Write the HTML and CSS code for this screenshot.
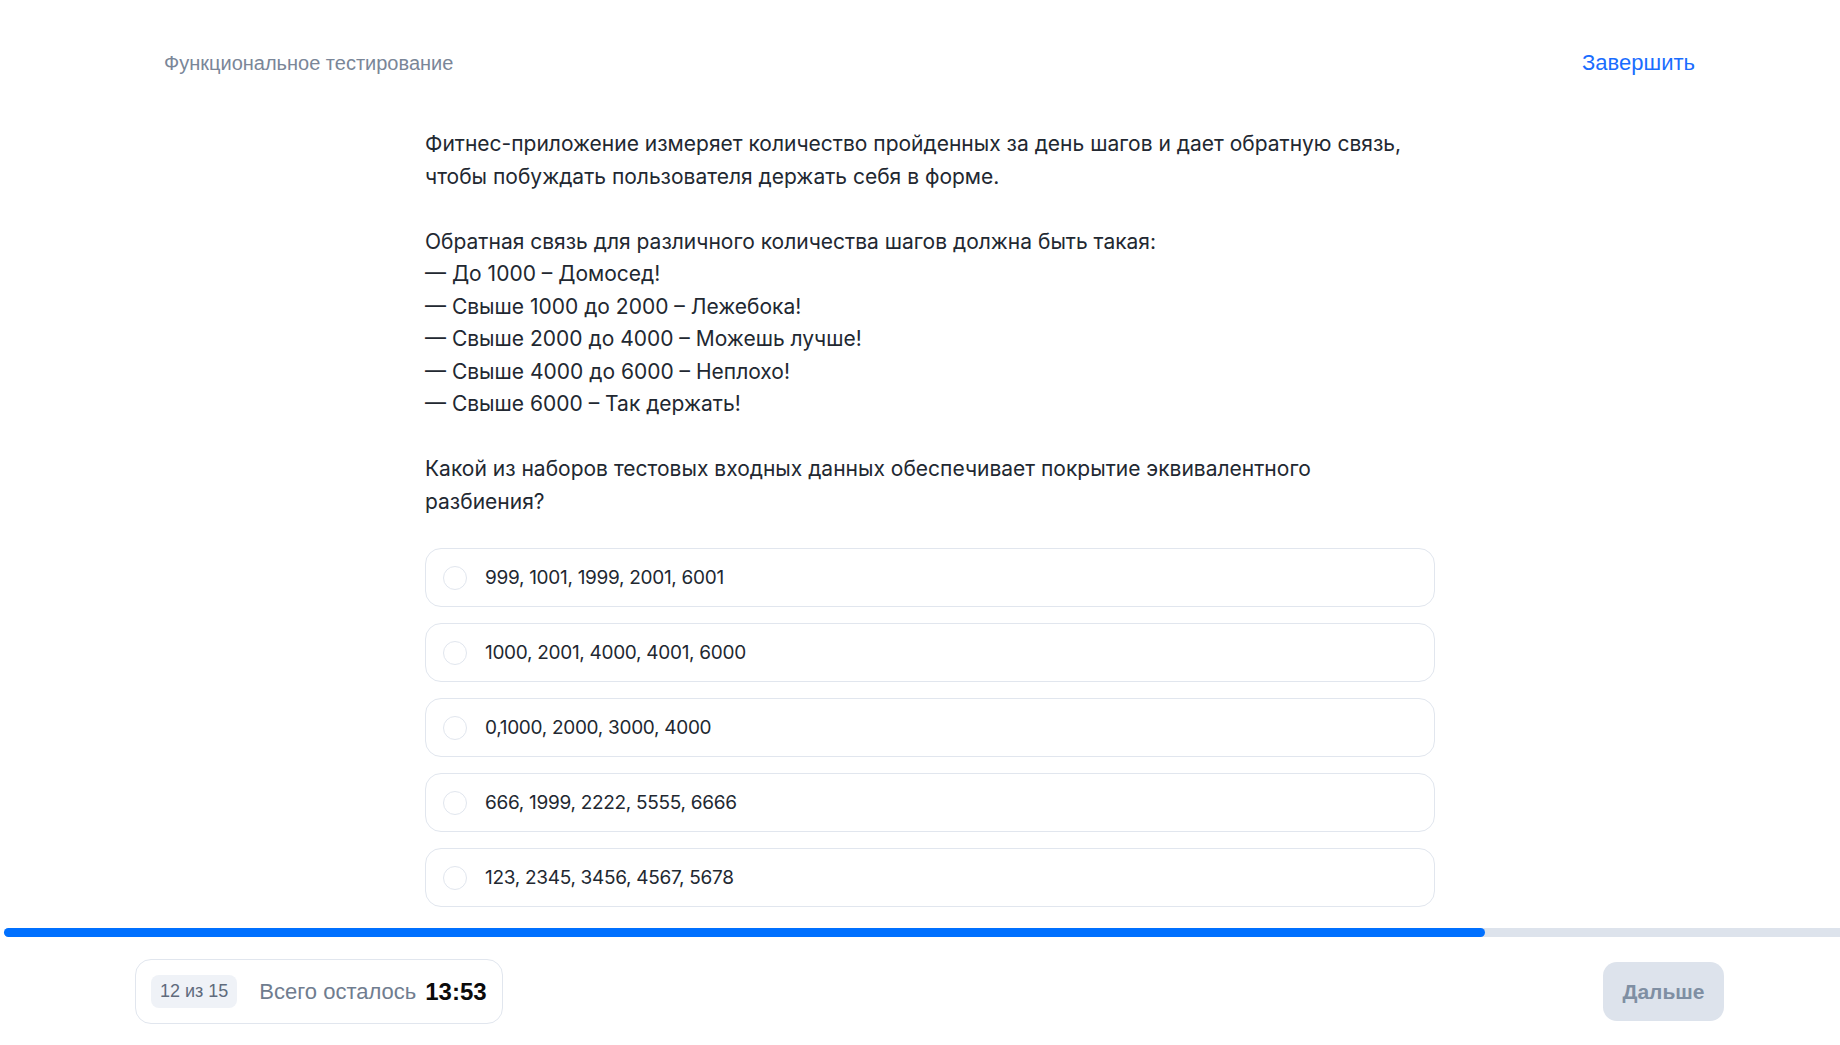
FILE: index.html
```html
<!DOCTYPE html>
<html lang="ru">
<head>
<meta charset="utf-8">
<title>Функциональное тестирование</title>
<link rel="stylesheet" href="styles.css">
</head>
<body>
<div class="page">
  <header class="top">
    <div class="title">Функциональное тестирование</div>
    <a class="finish" href="#">Завершить</a>
  </header>
  <main class="content">
    <p class="para">Фитнес-приложение измеряет количество пройденных за день шагов и дает обратную связь,<br>чтобы побуждать пользователя держать себя в форме.</p>
    <p class="para">Обратная связь для различного количества шагов должна быть такая:<br>— До 1000 – Домосед!<br>— Свыше 1000 до 2000 – Лежебока!<br>— Свыше 2000 до 4000 – Можешь лучше!<br>— Свыше 4000 до 6000 – Неплохо!<br>— Свыше 6000 – Так держать!</p>
    <p class="para">Какой из наборов тестовых входных данных обеспечивает покрытие эквивалентного<br>разбиения?</p>
    <div class="options">
      <label class="option"><span class="radio"></span><span class="opt-text">999, 1001, 1999, 2001, 6001</span></label>
      <label class="option"><span class="radio"></span><span class="opt-text">1000, 2001, 4000, 4001, 6000</span></label>
      <label class="option"><span class="radio"></span><span class="opt-text">0,1000, 2000, 3000, 4000</span></label>
      <label class="option"><span class="radio"></span><span class="opt-text">666, 1999, 2222, 5555, 6666</span></label>
      <label class="option"><span class="radio"></span><span class="opt-text">123, 2345, 3456, 4567, 5678</span></label>
    </div>
  </main>
  <div class="progress"><div class="progress-fill"></div></div>
  <footer class="bottom">
    <div class="status">
      <span class="badge">12 из 15</span>
      <span class="remain">Всего осталось</span>
      <span class="timer">13:53</span>
    </div>
    <button class="next" type="button">Дальше</button>
  </footer>
</div>
</body>
</html>
```

FILE: styles.css
```css
* { box-sizing: border-box; }
html, body { margin: 0; padding: 0; background: #fff; }
.page {
  width: 1840px;
  height: 1045px;
  overflow: hidden;
  display: flex;
  flex-direction: column;
}
.top {
  height: 126px;
  display: flex;
  align-items: center;
  justify-content: space-between;
  padding: 0 145px 0 164px;
  font-family: "Liberation Sans", Arial, sans-serif;
}
.title {
  font-size: 20px;
  color: #7a8698;
}
.finish {
  font-size: 22px;
  color: #1a6dff;
  text-decoration: none;
}
.content {
  margin: 2px 0 0 425px;
  width: 1010px;
  font-family: "Inter", "Noto Sans", sans-serif;
  color: #222831;
}
.para {
  margin: 0 0 32.5px;
  font-size: 21px;
  line-height: 32.5px;
}
.para:last-of-type { margin-bottom: 30px; }
.options {
  display: flex;
  flex-direction: column;
  gap: 16px;
}
.option {
  height: 59px;
  border: 1px solid #e1e6ee;
  border-radius: 16px;
  display: flex;
  align-items: center;
  padding-left: 17px;
  gap: 18px;
}
.radio {
  width: 24px;
  height: 24px;
  border: 1.5px solid #e1e6ee;
  border-radius: 50%;
  flex: none;
}
.opt-text {
  font-size: 19px;
  letter-spacing: -0.3px;
  color: #222831;
}
.progress {
  margin: 21px 0 0 4px;
  height: 9px;
  background: #dde3ec;
  border-radius: 5px 0 0 5px;
}
.progress-fill {
  width: 1481px;
  height: 100%;
  background: #0070ff;
  border-radius: 5px;
}
.bottom {
  margin-top: 22px;
  display: flex;
  align-items: center;
  justify-content: space-between;
  padding: 0 116px 0 135px;
  font-family: "Liberation Sans", Arial, sans-serif;
}
.status {
  height: 65px;
  border: 1px solid #e1e6ee;
  border-radius: 16px;
  display: flex;
  align-items: center;
  padding: 0 15px;
}
.badge {
  height: 33px;
  padding: 0 9px;
  display: flex;
  align-items: center;
  background: #eff2f7;
  border-radius: 8px;
  font-size: 18px;
  color: #5f6b7c;
  margin-right: 22px;
}
.remain {
  font-size: 22px;
  color: #707d8f;
  margin-right: 9px;
}
.timer {
  font-size: 24px;
  font-weight: bold;
  color: #0b0b0b;
}
.next {
  width: 121px;
  height: 59px;
  border: none;
  border-radius: 14px;
  background: #dde3ec;
  color: #7f8fa3;
  font-family: "Liberation Sans", Arial, sans-serif;
  font-weight: bold;
  font-size: 21px;
  padding: 0;
}
```
